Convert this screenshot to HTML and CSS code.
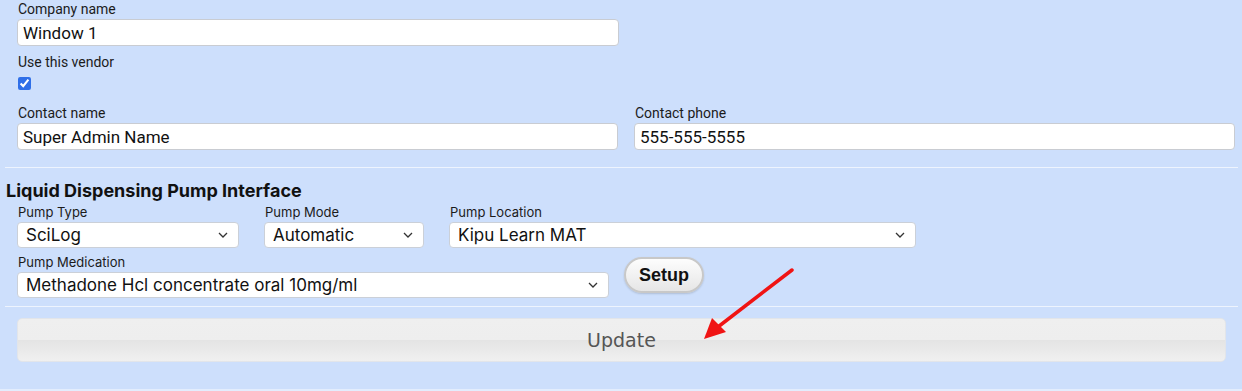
FILE: index.html
```html
<!DOCTYPE html>
<html lang="en">
<head>
    <meta charset="UTF-8">
    <title>Vendor</title>
    <link rel="stylesheet" href="styles.css">
</head>
<body>

    <div class="page">
        <div class="vendor">
            <div class="row">
                <div class="field half">
                    <label>Company name</label>
                    <input type="text" value="Window 1">
                </div>
            </div>
            <div class="row">
                <div class="field">
                    <label>Use this vendor</label>
                    <input type="checkbox" class="check" checked>
                </div>
            </div>
            <div class="row">
                <div class="field half">
                    <label>Contact name</label>
                    <input type="text" value="Super Admin Name">
                </div>
                <div class="field half">
                    <label>Contact phone</label>
                    <input type="text" value="555-555-5555">
                </div>
            </div>
        </div>

        <hr>

        <div class="pump">
            <h3>Liquid Dispensing Pump Interface</h3>
            <div class="pump-row">
                <div class="pfield type">
                    <label>Pump Type</label>
                    <select><option>SciLog</option></select>
                </div>
                <div class="pfield mode">
                    <label>Pump Mode</label>
                    <select><option>Automatic</option></select>
                </div>
                <div class="pfield location">
                    <label>Pump Location</label>
                    <select><option>Kipu Learn MAT</option></select>
                </div>
            </div>
            <div class="pump-row">
                <div class="pfield medication">
                    <label>Pump Medication</label>
                    <select><option>Methadone Hcl concentrate oral 10mg/ml</option></select>
                </div>
                <button class="setup-btn">Setup</button>
            </div>
        </div>

        <hr>

        <div class="actions">
            <button class="update-btn">Update</button>
        </div>

        <svg class="arrow" width="100" height="80" viewBox="0 0 100 80">
            <line x1="92" y1="4" x2="14" y2="64" stroke="#f01414" stroke-width="3.5" stroke-linecap="round"/>
            <polygon points="4,73 12,52 26,66" fill="#f01414"/>
        </svg>
    </div>

</body>
</html>
```

FILE: styles.css
```css
body {
    margin: 0;
    padding: 0;
    background-color: #cddffc;
    font-family: 'Roboto', sans-serif;
    color: #111;
}

.page {
    position: relative;
    width: 1242px;
    height: 389px;
    border-bottom: 2px solid #e3edfd;
}

.vendor {
    padding: 1px 7px 9px 17px;
}

.row {
    display: flex;
    gap: 16px;
}

.field {
    display: flex;
    flex-direction: column;
    margin-bottom: 8px;
}

.field.half {
    width: 602px;
}

.field label {
    font-size: 14px;
    line-height: 16px;
    margin-bottom: 2px;
    margin-left: 1px;
    color: #1b1b1b;
}

.field input[type="text"] {
    box-sizing: border-box;
    height: 27px;
    padding: 0 5px;
    border: 1px solid #c9ccd2;
    border-radius: 4px;
    background: #fff;
    font-family: 'Roboto', sans-serif;
    font-size: 17px;
    color: #111;
}

.check {
    width: 13px;
    height: 13px;
    margin: 5px 0 7px 1px;
    accent-color: #2f6fe8;
}

hr {
    margin: 0 4px 0 5px;
    border: none;
    border-top: 1px solid #eef4fe;
}

.pump {
    padding: 7px 7px 1px 6px;
}

.pump h3 {
    margin: 5px 0 4px 0;
    font-family: 'Inter', sans-serif;
    font-size: 18px;
    font-weight: 700;
    color: #111;
    line-height: 21px;
}

.pump-row {
    display: flex;
    align-items: flex-start;
    gap: 25px;
    padding-left: 11px;
}

.pfield {
    display: flex;
    flex-direction: column;
    margin-bottom: 7px;
}

.pfield label {
    font-family: 'Inter', sans-serif;
    font-size: 13px;
    line-height: 15px;
    margin-bottom: 2px;
    margin-left: 1px;
    color: #1b1b1b;
}

.pfield select {
    box-sizing: border-box;
    height: 26px;
    padding: 0 26px 0 8px;
    border: 1px solid #cbd0d8;
    border-radius: 4px;
    background: #fff url("data:image/svg+xml,%3Csvg xmlns='http://www.w3.org/2000/svg' width='10' height='6' viewBox='0 0 10 6'%3E%3Cpath d='M1 1l4 4 4-4' fill='none' stroke='%23333' stroke-width='1.3'/%3E%3C/svg%3E") no-repeat right 10px center;
    appearance: none;
    font-family: 'Inter', sans-serif;
    font-size: 17px;
    color: #111;
}

.type select { width: 222px; }
.mode select { width: 160px; }
.location select { width: 467px; }
.medication select { width: 592px; }

.pump-row .setup-btn {
    margin-left: -10px;
    margin-top: 2px;
}

.setup-btn {
    width: 80px;
    height: 36px;
    border: 2px solid #c8c8c8;
    border-radius: 18px;
    background: linear-gradient(#fdfdfd, #e6e6e6);
    box-shadow: 0 1px 2px rgba(0, 0, 0, 0.15);
    font-family: 'Liberation Sans', Arial, sans-serif;
    font-size: 18px;
    font-weight: 700;
    color: #111;
    cursor: pointer;
}

.actions {
    padding: 11px 17px 0 17px;
}

.update-btn {
    width: 1209px;
    height: 44px;
    border: 1px solid #e2e5ea;
    border-radius: 5px;
    background: linear-gradient(#efefef 0%, #eeeeee 50%, #e4e4e4 51%, #f0f0f0 100%);
    font-family: 'DejaVu Sans', Verdana, sans-serif;
    font-size: 19px;
    color: #555;
    cursor: pointer;
}

.arrow {
    position: absolute;
    left: 700px;
    top: 266px;
}
```
